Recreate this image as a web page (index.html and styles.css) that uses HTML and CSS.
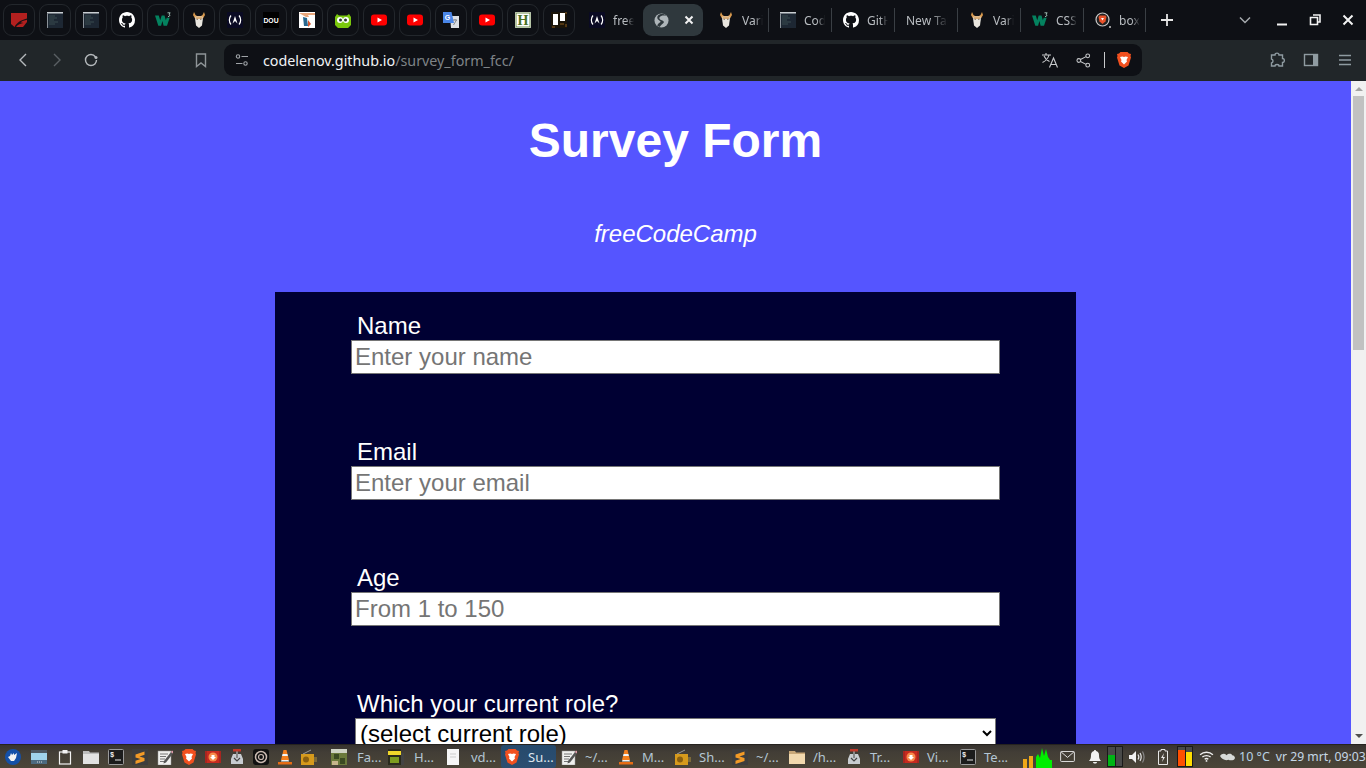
FILE: index.html
```html
<!DOCTYPE html>
<html lang="en">
<head>
<meta charset="utf-8">
<title>Survey Form</title>
<link rel="stylesheet" href="styles.css">
</head>
<body>
<svg class="defs" width="0" height="0" aria-hidden="true">
  <symbol id="i-red" viewBox="0 0 16 16"><path d="M0 1h16v9l-4 5H3.500L0 12z" fill="#b3201f"/><path d="M3.500 15c2-4 6-7 12.500-8.500v1.200C12 8.500 10.500 9.500 9.500 10.500c1.200-.2 2.200 0 3 .5-3 .3-5.500 1.500-7.500 4z" fill="#1c1114"/></symbol>
  <symbol id="i-shot" viewBox="0 0 16 16"><rect width="16" height="16" fill="#1d2733"/><rect width="16" height="1.500" fill="#c9ced2"/><rect y="1.500" width="1" height="14.500" fill="#8b9299"/><path d="M2 4h6M2 6h8M2 8h5M2 10h9M2 12h6" stroke="#3a4d50" stroke-width="1"/></symbol>
  <symbol id="i-gh" viewBox="0 0 16 16"><path fill="#fff" d="M8 0C3.580 0 0 3.580 0 8c0 3.540 2.290 6.530 5.470 7.590.4.070.55-.17.55-.38 0-.19-.01-.82-.01-1.490-2.010.37-2.530-.49-2.690-.94-.09-.23-.48-.94-.82-1.130-.28-.15-.68-.52-.01-.53.63-.01 1.080.58 1.230.82.720 1.210 1.870.87 2.330.66.070-.52.280-.87.510-1.070-1.780-.2-3.640-.89-3.640-3.950 0-.87.310-1.590.82-2.150-.08-.2-.36-1.020.08-2.120 0 0 .67-.21 2.200.82.640-.18 1.320-.27 2-.27s1.360.09 2 .27c1.530-1.040 2.200-.82 2.200-.82.440 1.100.16 1.920.08 2.120.51.560.82 1.270.82 2.150 0 3.070-1.870 3.750-3.650 3.950.29.250.54.730.54 1.480 0 1.070-.01 1.930-.01 2.200 0 .21.150.46.550.38A8.010 8.010 0 0 0 16 8c0-4.420-3.580-8-8-8z"/></symbol>
  <symbol id="i-w3" viewBox="0 0 16 16"><path d="M0 3.500h3.800l1.400 4.700 1.500-4.700h2.800l1.400 4.700.8-2.500h3l-2.700 8H8.600L7.400 9l-1.300 4.700H3.300z" fill="#04825f"/><path d="M12.500 .8h2.700l-1.200 1.500c1.300.2 1.200 2.300-1 2.300" fill="none" stroke="#bfe3d6" stroke-width=".8"/></symbol>
  <symbol id="i-var" viewBox="0 0 16 16"><path d="M3 0l1.500 3 1.500 1h4l1.500-1L13 0l1 3-2 3.500H4L2 3z" fill="#d99a4e"/><path d="M4.500 4.500h7l.3 3-.8 6-3 2.500-3-2.500-.8-6z" fill="#e9e6df"/><path d="M5 4.500h6V7H5z" fill="#dbb07a"/><path d="M5.500 7.300h1.500M9 7.300h1.500" stroke="#6d5c4d" stroke-width=".8"/></symbol>
  <symbol id="i-fcc" viewBox="0 0 16 16"><rect width="16" height="16" rx="1" fill="#0a0a23"/><path d="M4 3.500C1.800 6 1.800 10 4 12.500M12 3.500c2.200 2.500 2.200 6.500 0 9" fill="none" stroke="#fff" stroke-width="1.200"/><path d="M8 4l2.500 7.500L8 9l-2.500 2.500z" fill="#fff"/></symbol>
  <symbol id="i-dou" viewBox="0 0 16 16"><rect width="16" height="16" fill="#000"/><text x="8" y="10.500" text-anchor="middle" class="svg-dou">DOU</text></symbol>
  <symbol id="i-pic" viewBox="0 0 16 16"><rect width="16" height="16" fill="#fff"/><path d="M0 1h16v2H9l1 2H7z" fill="#e9a77c"/><path d="M4 5l4 1 1 8H5z" fill="#28688f"/><path d="M9 8l3 4-3 3z" fill="#d2552f"/></symbol>
  <symbol id="i-duo" viewBox="0 0 16 16"><path d="M2 2l2 1.500h8L14 2l2 3v8l-3 3H3l-3-3V5z" fill="#7ac70c"/><circle cx="5" cy="8" r="3" fill="#fff"/><circle cx="11" cy="8" r="3" fill="#fff"/><circle cx="5.500" cy="8" r="1.500" fill="#2b3b2a"/><circle cx="10.500" cy="8" r="1.500" fill="#2b3b2a"/></symbol>
  <symbol id="i-yt" viewBox="0 0 16 16"><rect y="2.500" width="16" height="11" rx="3" fill="#f00"/><path d="M6.500 5.500v5L11 8z" fill="#fff"/></symbol>
  <symbol id="i-gt" viewBox="0 0 16 16"><path d="M7 4h9v12H8z" fill="#dcdfe3"/><path d="M0 0h8.500L11 11H0z" fill="#4a86e8"/><text x="4.500" y="8" text-anchor="middle" class="svg-g">G</text><path d="M10 8h4M12 7v1M10.500 13l3-5" stroke="#7a7e85" stroke-width=".9" fill="none"/></symbol>
  <symbol id="i-h" viewBox="0 0 16 16"><rect width="16" height="16" rx="1" fill="#fff"/><rect x="1" y="1" width="14" height="14" fill="none" stroke="#4a7022" stroke-width=".8"/><text x="8" y="13" text-anchor="middle" class="svg-h">H</text></symbol>
  <symbol id="i-tr" viewBox="0 0 16 16"><rect width="16" height="16" fill="#1a1408"/><rect x="2" y="2" width="5" height="11" fill="#fff"/><rect x="9" y="1" width="5" height="8" fill="#fff"/><path d="M1 15h3M14 1h2M15 12v3M9 12h4" stroke="#8a5a1e" stroke-width="1"/></symbol>
  <symbol id="i-brave" viewBox="0 0 16 16"><path d="M4.500 0h7L13 1.500l2 .5-.5 2 .5 1.500-2.500 8L8 16l-4.500-2.500-2.500-8L1.500 4 1 2l2-.5z" fill="#f1501f"/><path d="M4 5l2.500-.5L8 5l1.500-.5L12 5l-1.500 3 .5 1.500-3 3-3-3 .5-1.500z" fill="#fff"/></symbol>
  <symbol id="i-box" viewBox="0 0 16 16"><circle cx="7.500" cy="7.500" r="6.500" fill="#222" stroke="#c8c8c8" stroke-width="1.200"/><path d="M4.500 3.500h6l1 1.500-1 4.500-3 2.500-3-2.500-1-4.500z" fill="#e9522a"/><path d="M6 6h3L7.500 8.500z" fill="#fff"/><circle cx="15" cy="15" r="1" fill="#c8c8c8"/></symbol>
  <symbol id="i-globe" viewBox="0 0 16 16"><circle cx="8" cy="8" r="7.500" fill="#aeb5b9"/><path d="M13.500 3c-3-.8-6.500-.5-7.500 1.500-1 1.800 1 2.800 3 3.500 2 .7 2 2.300.5 3.300-1.200.8-2.500 2-3.500 3.500l-2.500-1.300c.5-1.500 1.500-2.500 2.800-3.300 1.200-.7.800-1.500-.3-2C3.500 7 2.700 4.500 4.500 2.500 7 .5 11 .8 13.500 3z" fill="#2f383d"/></symbol>
  <symbol id="t-sublime" viewBox="0 0 16 16"><rect width="16" height="16" fill="#3d3d3d"/><path d="M3.500 5.500l9-3v3.200l-5 1.700 5 1.600v3l-9 3V11.800l5-1.700-5-1.600z" fill="#f29a26"/></symbol>
  <symbol id="t-term" viewBox="0 0 16 16"><rect x=".5" y=".5" width="15" height="15" rx="1" fill="#1c1c1c" stroke="#9a9a9a"/><text x="2" y="7.500" class="svg-term">$</text><path d="M7 11h6" stroke="#e6e6e6" stroke-width="1"/></symbol>
  <symbol id="t-edit" viewBox="0 0 16 16"><rect x="1" y="2" width="13" height="14" fill="#f0f0ee" stroke="#999" stroke-width=".5"/><path d="M3 5h8M3 7.500h6M3 10h5M3 12.500h5" stroke="#555" stroke-width=".8"/><path d="M7 12l7-9 2 1.500-7 9-2.500 1z" fill="#555"/><path d="M14 3l1-1.500 1.500 1-1 2z" fill="#e6a0b0"/></symbol>
  <symbol id="t-vid" viewBox="0 0 16 16"><rect y="2" width="16" height="12" fill="#c62a1f"/><circle cx="8" cy="8" r="4.500" fill="#f78a4a"/><path d="M6.500 6h3v2H11L8 11 5 8h1.500z" fill="#fff"/><path d="M1 2v12M15 2v12" stroke="#822" stroke-width="1"/></symbol>
  <symbol id="t-trans" viewBox="0 0 16 16"><path d="M2 10l2-5h8l2 5v5H2z" fill="#c8ccd0"/><path d="M8 2v7" stroke="#888" stroke-width="2"/><rect x="4" y="0" width="8" height="2.500" fill="#c0392b"/><path d="M5 9l3 3 3-3" stroke="#444" stroke-width="1.200" fill="none"/></symbol>
  <symbol id="t-q" viewBox="0 0 16 16"><rect width="16" height="16" rx="3" fill="#111"/><circle cx="8" cy="8" r="5.500" fill="none" stroke="#c9b9b0" stroke-width="1.500"/><circle cx="8" cy="8" r="2.500" fill="none" stroke="#c9b9b0" stroke-width="1.200"/></symbol>
  <symbol id="t-vlc" viewBox="0 0 16 16"><path d="M6.500 1h3l1 4h-5zM5 7h6l1 4H4z" fill="#f4801f"/><path d="M5.500 5h5l.5 2H5zM4.500 11h7l.5 1.500H4z" fill="#f2f2f2"/><path d="M1 13h14v2.500H1z" fill="#e66c14"/></symbol>
  <symbol id="t-radio" viewBox="0 0 16 16"><rect x="0" y="5" width="13" height="11" fill="#d69a1c"/><circle cx="5" cy="10.500" r="3" fill="#8a5f10"/><path d="M2 5l8-4" stroke="#999" stroke-width="1"/><rect x="13" y="8" width="3" height="5" fill="#7c6a3a"/></symbol>
  <symbol id="t-folder" viewBox="0 0 16 16"><path d="M0 2h6l1 1.500h9V15H0z" fill="#c9a878"/><path d="M0 5h16v10H0z" fill="#f2d9ae"/></symbol>
  <symbol id="t-book" viewBox="0 0 16 16"><rect width="13" height="16" fill="#2a2a1c"/><rect y="2" width="13" height="4" fill="#f0d72a"/><rect x="2" y="8" width="9" height="6" fill="#7d9c1f"/><rect x="13" y="4" width="3" height="12" fill="#444"/></symbol>
  <symbol id="t-doc" viewBox="0 0 16 16"><rect x="2" width="12" height="16" fill="#f6f6f6"/><path d="M5 5h6M5 8h6" stroke="#bbb" stroke-width=".7"/></symbol>
  <symbol id="t-mine" viewBox="0 0 16 16"><rect width="16" height="16" fill="#6b7a3c"/><path d="M0 0h16v4H0z" fill="#cfd3c4"/><path d="M3 5h5v5H3zM9 9h5v6H9z" fill="#3b4a22"/><path d="M1 12h6v4H1z" fill="#c6b58c"/></symbol>
</svg>

<div class="screen">
  <header class="tabstrip">
    <div class="pinned">
      <div class="pin"><svg class="fav"><use href="#i-red"/></svg></div>
      <div class="pin"><svg class="fav"><use href="#i-shot"/></svg></div>
      <div class="pin"><svg class="fav"><use href="#i-shot"/></svg></div>
      <div class="pin"><svg class="fav"><use href="#i-gh"/></svg></div>
      <div class="pin"><svg class="fav"><use href="#i-w3"/></svg></div>
      <div class="pin"><svg class="fav"><use href="#i-var"/></svg></div>
      <div class="pin"><svg class="fav"><use href="#i-fcc"/></svg></div>
      <div class="pin"><svg class="fav"><use href="#i-dou"/></svg></div>
      <div class="pin"><svg class="fav"><use href="#i-pic"/></svg></div>
      <div class="pin"><svg class="fav"><use href="#i-duo"/></svg></div>
      <div class="pin"><svg class="fav"><use href="#i-yt"/></svg></div>
      <div class="pin"><svg class="fav"><use href="#i-yt"/></svg></div>
      <div class="pin"><svg class="fav"><use href="#i-gt"/></svg></div>
      <div class="pin"><svg class="fav"><use href="#i-yt"/></svg></div>
      <div class="pin"><svg class="fav"><use href="#i-h"/></svg></div>
      <div class="pin"><svg class="fav"><use href="#i-tr"/></svg></div>
    </div>
    <div class="tabs">
      <div class="tab tab-first"><svg class="fav"><use href="#i-fcc"/></svg><span class="tab-title">freeCodeCamp</span></div>
      <div class="tab tab-active"><svg class="fav-small"><use href="#i-globe"/></svg><svg class="tab-close" viewBox="0 0 10 10"><path d="M1.500 1.500l7 7M8.500 1.500l-7 7"/></svg></div>
      <div class="tab tab-var"><svg class="fav"><use href="#i-var"/></svg><span class="tab-title">Variables</span></div>
      <div class="tab tab-sep"><svg class="fav"><use href="#i-shot"/></svg><span class="tab-title">Codelenov</span></div>
      <div class="tab tab-sep"><svg class="fav"><use href="#i-gh"/></svg><span class="tab-title">GitHub</span></div>
      <div class="tab tab-sep tab-plain"><span class="tab-title">New Tab</span></div>
      <div class="tab tab-sep"><svg class="fav"><use href="#i-var"/></svg><span class="tab-title">Variables</span></div>
      <div class="tab tab-sep"><svg class="fav"><use href="#i-w3"/></svg><span class="tab-title">CSS</span></div>
      <div class="tab tab-sep"><svg class="fav"><use href="#i-box"/></svg><span class="tab-title">box-sizing</span></div>
    </div>
    <svg class="newtab" viewBox="0 0 14 14"><path d="M7 1v12M1 7h12"/></svg>
    <div class="win-controls">
      <svg class="wc-chev" viewBox="0 0 12 8"><path d="M1 1.500l5 5 5-5"/></svg>
      <svg class="wc-btn" viewBox="0 0 12 12"><path d="M1 10.500h10" class="wc-thick"/></svg>
      <svg class="wc-btn" viewBox="0 0 12 12"><path d="M4 1h7v7h-2M1.500 3.500h7v7h-7z" class="wc-med"/></svg>
      <svg class="wc-btn" viewBox="0 0 12 12"><path d="M1.500 1.500l9 9M10.500 1.500l-9 9" class="wc-thick"/></svg>
    </div>
  </header>

  <nav class="toolbar">
    <div class="nav-left">
      <svg class="tb-icon" viewBox="0 0 16 16"><path d="M11 2L5 8l6 6"/></svg>
      <svg class="tb-icon tb-dim" viewBox="0 0 16 16"><path d="M5 2l6 6-6 6"/></svg>
      <svg class="tb-icon" viewBox="0 0 16 16"><path d="M13.500 8A5.500 5.500 0 1 1 8 2.500c2 0 3.500 1 4.500 2.500"/><circle cx="13" cy="5.500" r="1.500" class="tb-fill"/></svg>
    </div>
    <svg class="tb-icon tb-bookmark" viewBox="0 0 16 16"><path d="M3.500 2h9v12.500L8 11l-4.500 3.500z"/></svg>
    <div class="urlbar">
      <svg class="url-icon" viewBox="0 0 14 14"><circle cx="3" cy="3.500" r="1.700"/><path d="M6.500 3.500H13M1 10.500h6.500"/><circle cx="10.500" cy="10.500" r="1.700"/></svg>
      <div class="url-text"><span class="url-host">codelenov.github.io</span><span class="url-path">/survey_form_fcc/</span></div>
      <svg class="url-action" viewBox="0 0 18 18"><path d="M1 4h9M5 2v2M8 4c-.8 3.500-3.500 6-6.500 7.500M3 5c1 2.500 3 4.500 5.500 5.500"/><path d="M8.500 16.500L12.500 7l4 9.500M10 13.500h5"/></svg>
      <svg class="url-action url-share" viewBox="0 0 16 16"><circle cx="12.500" cy="3" r="2"/><circle cx="3" cy="8" r="2"/><circle cx="12.500" cy="13" r="2"/><path d="M4.800 7l5.900-3.100M4.800 9l5.900 3.100"/></svg>
      <span class="url-divider"></span>
      <svg class="url-brave"><use href="#i-brave"/></svg>
    </div>
    <div class="nav-right">
      <svg class="tb-icon tb-soft" viewBox="0 0 16 16"><path d="M6 3c0-2.500 4-2.500 4 0h3.500v3.500c2.500 0 2.500 4 0 4V14H10c0-2-4-2-4 0H2.500v-3c2-.5 2-3.500 0-4V3z"/></svg>
      <svg class="tb-icon tb-soft" viewBox="0 0 16 16"><rect x="1.500" y="2.500" width="13" height="11"/><rect x="10" y="2.500" width="4.500" height="11" class="tb-fill"/></svg>
      <svg class="tb-icon tb-soft" viewBox="0 0 16 16"><path d="M2 3.500h12M2 8h12M2 12.500h12"/></svg>
    </div>
  </nav>

  <div class="viewport">
    <main class="page">
      <h1 class="title">Survey Form</h1>
      <p class="subtitle">freeCodeCamp</p>
      <form class="survey">
        <div class="field">
          <label class="field-label" for="name">Name</label>
          <input class="field-input" id="name" type="text" placeholder="Enter your name">
        </div>
        <div class="field">
          <label class="field-label" for="email">Email</label>
          <input class="field-input" id="email" type="email" placeholder="Enter your email">
        </div>
        <div class="field">
          <label class="field-label" for="age">Age</label>
          <input class="field-input" id="age" type="text" placeholder="From 1 to 150">
        </div>
        <div class="field">
          <label class="field-label" for="role">Which your current role?</label>
          <select class="field-select" id="role"><option>(select current role)</option></select>
        </div>
      </form>
    </main>
    <div class="scrollbar">
      <span class="sb-up"></span>
      <span class="sb-thumb"></span>
      <span class="sb-down"></span>
    </div>
  </div>

  <footer class="taskbar">
    <div class="launchers">
      <svg class="launch" viewBox="0 0 16 16"><circle cx="8" cy="8" r="8" fill="#1450a8"/><path d="M3 8l2-1 1-3 1 2 2-2v2l3-2-1 5-2 3H6z" fill="#f4f4f4"/></svg>
      <svg class="launch" viewBox="0 0 16 16"><rect y="1" width="16" height="14" fill="#9fd4ec"/><rect y="1" width="16" height="3" fill="#4d5a63"/><rect y="11" width="16" height="4" fill="#4c6a80"/><path d="M6 13h1M8 13h1M10 13h1" stroke="#ddd"/></svg>
      <svg class="launch" viewBox="0 0 16 16"><rect x="2.500" y="3" width="11" height="12" fill="none" stroke="#f2f2f2" stroke-width="1.200"/><rect x="5.500" y="1" width="5" height="3.500" fill="#f2f2f2"/></svg>
      <svg class="launch" viewBox="0 0 16 16"><path d="M0 2h6l1 1.500h9V15H0z" fill="#bcbcbc"/><path d="M0 5h16v10H0z" fill="#e2e2e2"/></svg>
      <svg class="launch"><use href="#t-term"/></svg>
      <svg class="launch"><use href="#t-sublime"/></svg>
      <svg class="launch"><use href="#t-edit"/></svg>
      <svg class="launch"><use href="#i-brave"/></svg>
      <svg class="launch"><use href="#t-vid"/></svg>
      <svg class="launch"><use href="#t-trans"/></svg>
      <svg class="launch"><use href="#t-q"/></svg>
      <svg class="launch"><use href="#t-vlc"/></svg>
      <svg class="launch"><use href="#t-radio"/></svg>
    </div>
    <div class="tasks">
      <div class="task"><svg class="task-icon"><use href="#t-mine"/></svg><span>Fa...</span></div>
      <div class="task"><svg class="task-icon"><use href="#t-book"/></svg><span>H...</span></div>
      <div class="task"><svg class="task-icon"><use href="#t-doc"/></svg><span>vd...</span></div>
      <div class="task task-active"><svg class="task-icon"><use href="#i-brave"/></svg><span>Su...</span></div>
      <div class="task"><svg class="task-icon"><use href="#t-edit"/></svg><span>~/...</span></div>
      <div class="task"><svg class="task-icon"><use href="#t-vlc"/></svg><span>M...</span></div>
      <div class="task"><svg class="task-icon"><use href="#t-radio"/></svg><span>Sh...</span></div>
      <div class="task"><svg class="task-icon"><use href="#t-sublime"/></svg><span>~/...</span></div>
      <div class="task"><svg class="task-icon"><use href="#t-folder"/></svg><span>/h...</span></div>
      <div class="task"><svg class="task-icon"><use href="#t-trans"/></svg><span>Tr...</span></div>
      <div class="task"><svg class="task-icon"><use href="#t-vid"/></svg><span>Vi...</span></div>
      <div class="task"><svg class="task-icon"><use href="#t-term"/></svg><span>Te...</span></div>
    </div>
    <div class="tray">
      <svg class="tray-cpu" viewBox="0 0 29 22"><path d="M0 13h4v9H0zM6 10h4v12H6z" fill="#f0a818"/><path d="M13 11l2-3 2 4 2-10 2 8 2-7 2 8 2 3 2 0v8H13z" fill="#00ee00"/></svg>
      <svg class="tray-mail" viewBox="0 0 16 12"><rect x=".5" y=".5" width="15" height="11" rx="1"/><path d="M1 1l7 6 7-6"/></svg>
      <svg class="tray-bell" viewBox="0 0 14 14"><path d="M7 0c.8 0 1 .5 1 1 2 .5 3 2 3 4 0 3 .5 4.500 2 6H1c1.500-1.500 2-3 2-6 0-2 1-3.500 3-4 0-.5.200-1 1-1zM5 12h4c0 2-4 2-4 0z" fill="#f2f2f2"/></svg>
      <div class="meter"><span class="meter-bar"><span class="fill-green"></span></span><span class="meter-bar"></span></div>
      <svg class="tray-vol" viewBox="0 0 16 14"><path d="M0 5h3l4-4v12l-4-4H0z" fill="#f2f2f2"/><path d="M9 4.500c1 1.500 1 3.500 0 5M11 3c1.500 2.500 1.500 5.500 0 8" class="vol-a"/><path d="M13.500 1.500c2 3.500 2 7.500 0 11" class="vol-b"/></svg>
      <svg class="tray-batt" viewBox="0 0 10 16"><path d="M3 .5h4v1.500h2.500v13.500H.5V2H3z"/><path d="M6 4L3 9h2l-1 4 3-5H5z" class="batt-bolt"/></svg>
      <div class="meter meter-hot"><span class="meter-bar"><span class="fill-orange"></span></span><span class="meter-bar"><span class="fill-yellow"></span></span></div>
      <svg class="tray-wifi" viewBox="0 0 16 12"><path d="M1 4c4-3.500 10-3.500 14 0M3.500 6.500c2.500-2 6.500-2 9 0M6 9c1-.8 3-.8 4 0"/><circle cx="8" cy="10.800" r="1" class="wifi-dot"/></svg>
      <svg class="tray-cloud" viewBox="0 0 16 10"><path d="M0 4c2-3 5-3 7-1 2-2 5-2 6 0 2 0 3 2 3 3-1 3-5 3-7 2-3 1-7 0-9-4z" fill="#d8dad8"/></svg>
      <span class="tray-temp">10 °C</span>
      <span class="tray-clock">vr 29 mrt, 09:03</span>
    </div>
  </footer>
</div>
</body>
</html>
```
FILE: styles.css
```css
* { box-sizing: border-box; }
html, body { margin: 0; padding: 0; height: 100%; overflow: hidden; }
body { font-family: "Noto Sans", sans-serif; background: #0e1015; }
.defs { display: block; height: 0; width: 0; }
.svg-dou { font: bold 6.800px "Liberation Sans", sans-serif; fill: #fff; }
.svg-g { font: bold 7px "Liberation Sans", sans-serif; fill: #fff; }
.svg-h { font: bold 14px "Liberation Serif", serif; fill: #4a7022; }
.svg-term { font: bold 7px "Liberation Mono", monospace; fill: #eee; }

.screen { width: 1366px; height: 768px; display: flex; flex-direction: column; }

/* tab strip */
.tabstrip { height: 40px; flex: none; display: flex; align-items: center; background: #0e1015; padding-left: 3px; }
.pinned { display: flex; gap: 4px; }
.pin { width: 32px; height: 32px; border: 1px solid #23272c; border-radius: 9px; display: flex; align-items: center; justify-content: center; }
.fav { width: 16px; height: 16px; flex: none; display: block; }
.fav-small { width: 15px; height: 15px; flex: none; display: block; }
.tabs { display: flex; align-items: center; }
.tab { width: 63px; height: 32px; display: flex; align-items: center; gap: 8px; padding-left: 12px; color: #b9bdc1; position: relative; flex: none; }
.tab-first { width: 68px; padding-left: 14px; }
.tab-active { width: 60px; background: #2f383d; border-radius: 9px; padding-left: 11px; gap: 15px; }
.tab-var { padding-left: 15px; width: 65px; }
.tab-plain { padding-left: 12px; }
.tab-sep::before { content: ""; position: absolute; left: 0; top: 4px; height: 24px; width: 1px; background: #3a3f44; }
.tab-title { font-size: 12px; white-space: nowrap; overflow: hidden; width: 21px; -webkit-mask-image: linear-gradient(90deg, #000 60%, transparent); mask-image: linear-gradient(90deg, #000 60%, transparent); }
.tab-plain .tab-title { width: 42px; }
.tab-close { width: 10px; height: 10px; fill: none; stroke: #f2f2f2; stroke-width: 2; }
.tab-sep:last-child::after { content: ""; position: absolute; right: 0; top: 4px; height: 24px; width: 1px; background: #3a3f44; }
.newtab { width: 14px; height: 14px; margin-left: 14px; fill: none; stroke: #e6e6e6; stroke-width: 1.800; flex: none; }
.win-controls { display: flex; align-items: center; margin-left: auto; padding-right: 12px; gap: 21px; }
.wc-chev { width: 12px; height: 8px; fill: none; stroke: #a6aaae; stroke-width: 1.500; margin-right: 4px; }
.wc-btn { width: 12px; height: 12px; fill: none; stroke: #f2f2f2; }
.wc-thick { stroke-width: 2; }
.wc-med { stroke-width: 1.600; }

/* toolbar */
.toolbar { height: 41px; flex: none; display: flex; align-items: center; background: #212629; border-bottom: 1px solid #212629; padding-left: 15px; }
.nav-left { display: flex; gap: 18px; align-items: center; }
.tb-icon { width: 16px; height: 16px; fill: none; stroke: #b5b9bc; stroke-width: 1.400; flex: none; display: block; }
.tb-dim { stroke: #5a6064; }
.tb-fill { fill: #b5b9bc; stroke: none; }
.tb-soft { stroke: #8f9ba1; }
.tb-soft .tb-fill { fill: #8f9ba1; }
.tb-bookmark { margin-left: 94px; stroke: #8f9598; }
.urlbar { width: 918px; height: 32px; margin-left: 15px; background: #0e1015; border-radius: 9px; display: flex; align-items: center; padding-left: 11px; flex: none; }
.url-icon { width: 14px; height: 14px; fill: none; stroke: #a0a4a8; stroke-width: 1.100; flex: none; }
.url-text { font-size: 14.300px; margin-left: 14px; flex: 1; white-space: nowrap; }
.url-host { color: #f0f3f6; }
.url-path { color: #7e8387; }
.url-action { width: 18px; height: 18px; fill: none; stroke: #c8cacc; stroke-width: 1.100; flex: none; margin-right: 17px; }
.url-share { width: 15px; height: 15px; margin-right: 13px; }
.url-divider { width: 1px; height: 16px; background: #c8cacc; flex: none; }
.url-brave { width: 16px; height: 18px; margin: 0 10px 0 11px; flex: none; }
.nav-right { display: flex; gap: 18px; margin-left: 127px; align-items: center; }

/* page */
.viewport { flex: 1; display: flex; min-height: 0; overflow: hidden; }
.page { flex: 1; min-width: 0; background: #5555ff; color: #fff; font-family: "Liberation Sans", sans-serif; padding-top: 32px; overflow: hidden; }
.title { font-size: 48px; line-height: 55px; font-weight: bold; text-align: center; margin: 0 0 52px; }
.subtitle { font-size: 24px; line-height: 28px; font-style: italic; text-align: center; margin: 0 0 44px; }
.survey { width: 801px; margin: 0 auto; background: #000033; padding: 21px 76px 0; }
.field { display: flex; flex-direction: column; height: 126px; }
.field-label { font-size: 24px; line-height: 25px; padding-bottom: 2px; padding-left: 6px; }
.field-input { width: 649px; height: 34px; font: 24px "Liberation Sans", sans-serif; padding: 1px 2px 1px 3px; border: 1px solid #767676; background: #fff; color: #000; margin: 0; border-radius: 0; outline: 0; }
.field-input::placeholder { color: #757575; opacity: 1; }
.field-select { width: 641px; height: 30px; margin: 0 0 0 4px; font: 24px "Liberation Sans", sans-serif; background: #fff; color: #000; border: 1px solid #767676; border-radius: 0; }

.scrollbar { width: 15px; flex: none; background: #f1f1f1; display: flex; flex-direction: column; align-items: center; position: relative; }
.sb-up { width: 0; height: 0; margin-top: 6px; border-left: 4px solid transparent; border-right: 4px solid transparent; border-bottom: 4px solid #a3a3a3; }
.sb-thumb { width: 11px; height: 254px; background: #c1c1c1; margin-top: 5px; }
.sb-down { width: 0; height: 0; margin-top: auto; margin-bottom: 6px; border-left: 4px solid transparent; border-right: 4px solid transparent; border-top: 4px solid #505050; }

/* taskbar */
.taskbar { height: 24px; flex: none; display: flex; align-items: center; background: linear-gradient(180deg, #37332f 0, #423d36 30%, #4b4538 100%); border-top: 1px solid #26231f; color: #b4c6d4; font-size: 13px; }
.launchers { display: flex; align-items: center; gap: 8.100px; padding-left: 5px; width: 329px; flex: none; }
.launch { width: 16px; height: 16px; flex: none; display: block; }
.launch:nth-child(-n+3) { margin-right: 2px; }
.launch:nth-child(4) { margin-right: 1px; }
.tasks { display: flex; align-items: center; flex: none; width: 691px; height: 100%; }
.task { width: 57px; height: 23px; display: flex; align-items: center; gap: 8px; padding-left: 2px; flex: none; white-space: nowrap; }
.task:nth-child(-n+3) { gap: 10px; }
.task-icon { width: 16px; height: 16px; flex: none; }
.task-active { width: 55px; margin: 0 3px 0 1px; background: linear-gradient(180deg, #264a6c, #2c4e70); border-radius: 3px; color: #dde6ee; padding-left: 3px; }
.tray { flex: 1; display: flex; align-items: center; height: 100%; padding-left: 3px; }
.tray-cpu { width: 29px; height: 22px; flex: none; }
.tray-mail { width: 15px; height: 11px; fill: none; stroke: #eee; stroke-width: 1; margin-left: 8px; flex: none; }
.tray-bell { width: 14px; height: 14px; margin-left: 13px; flex: none; }
.meter { display: flex; gap: 1px; margin-left: 5px; height: 21px; background: #1a1a1a; padding: 1px; flex: none; }
.meter-bar { width: 7px; background: #494a49; display: flex; flex-direction: column; justify-content: flex-end; }
.meter .meter-bar:last-child { width: 6px; }
.fill-green { height: 11px; background: #00b515; }
.fill-orange { height: 16px; background: #ff5000; }
.fill-yellow { height: 14px; background: #ffdc00; }
.tray-vol { width: 16px; height: 14px; margin-left: 6px; flex: none; fill: none; }
.vol-a { stroke: #e6e6e6; stroke-width: 1.200; }
.vol-b { stroke: #888; stroke-width: 1.200; }
.tray-batt { width: 10px; height: 16px; margin-left: 13px; flex: none; fill: none; stroke: #e6e6e6; }
.batt-bolt { fill: #e6e6e6; stroke: none; }
.meter-hot { margin-left: 9px; }
.tray-wifi { width: 15px; height: 11px; margin-left: 6px; flex: none; fill: none; stroke: #eee; stroke-width: 1.500; }
.wifi-dot { fill: #eee; stroke: none; }
.tray-cloud { width: 15px; height: 10px; margin-left: 6px; flex: none; }
.tray-temp { font-size: 12.500px; margin-left: 4px; white-space: nowrap; color: #b9d2e4; }
.tray-clock { font-size: 12.200px; margin-left: 6px; white-space: nowrap; color: #c6d8e6; }
```
